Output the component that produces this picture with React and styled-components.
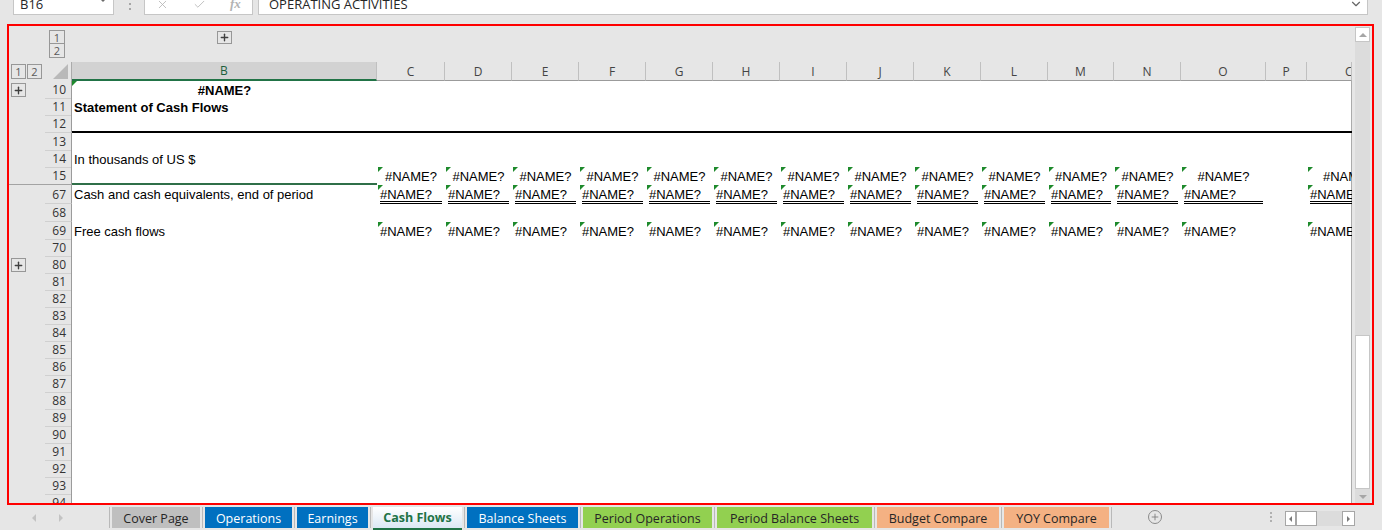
import React from "react"
import styled, { createGlobalStyle } from "styled-components"
import { X, Check, ChevronDown, Plus } from "lucide-react"

// column widths for B..Q (last one is cut by the scrollbar)
const COLS = [305, 68, 67, 67, 67, 67, 67, 67, 67, 67, 67, 66, 67, 85, 41, 45]
const LETTERS = ["B", "C", "D", "E", "F", "G", "H", "I", "J", "K", "L", "M", "N", "O", "P", "C"]
const TEMPLATE = `36px 27px ${COLS.map((w) => w + "px").join(" ")}`

const ROWS = [
    { n: 10, h: 17, plus: true, b: { text: "#NAME?", bold: true, center: true, err: true } },
    { n: 11, h: 17, b: { text: "Statement of Cash Flows", bold: true } },
    { n: 12, h: 18, thick: true },
    { n: 13, h: 17 },
    { n: 14, h: 17, b: { text: "In thousands of US $" } },
    { n: 15, h: 17, sel: true, values: "center" },
    "divider",
    { n: 67, h: 19, b: { text: "Cash and cash equivalents, end of period" }, values: "double" },
    { n: 68, h: 18 },
    { n: 69, h: 17, b: { text: "Free cash flows" }, values: "left" },
    { n: 70, h: 17 },
    { n: 80, h: 17, plus: true },
    ...Array.from({ length: 14 }, (_, i) => ({ n: 81 + i, h: 17 })),
]

const TABS = [
    { label: "Cover Page", w: 88, bg: "#bfbfbf", fg: "#262626" },
    { label: "Operations", w: 87, bg: "#0070c0", fg: "#fff" },
    { label: "Earnings", w: 71, bg: "#0070c0", fg: "#fff" },
    { label: "Cash Flows", w: 89, active: true },
    { label: "Balance Sheets", w: 111, bg: "#0070c0", fg: "#fff" },
    { label: "Period Operations", w: 129, bg: "#92d050", fg: "#262626" },
    { label: "Period Balance Sheets", w: 155, bg: "#92d050", fg: "#262626" },
    { label: "Budget Compare", w: 122, bg: "#f4b183", fg: "#262626" },
    { label: "YOY Compare", w: 105, bg: "#f4b183", fg: "#262626" },
]

const GlobalStyle = createGlobalStyle`
    body {
        margin: 0;
        background: #e6e6e6;
        font-family: "Liberation Sans", Arial, sans-serif;
        overflow: hidden;
    }
`

const Page = styled.div`
    width: 1382px;
    height: 530px;
    display: flex;
    flex-direction: column;
    background: #e6e6e6;
    overflow: hidden;
`

/* ---------- formula bar ---------- */

const TopBar = styled.div`
    height: 24px;
    flex-shrink: 0;
    box-sizing: border-box;
    padding: 0 0 9px 13px;
    display: flex;
    align-items: flex-end;
    overflow: hidden;
    font-family: "Open Sans", sans-serif;
`

const InputBox = styled.div`
    height: 22px;
    box-sizing: border-box;
    background: #fff;
    border: 1px solid #c6c6c6;
    display: flex;
    align-items: center;
    flex-shrink: 0;
    font-size: 13px;
    color: #262626;
`

const NameBox = styled(InputBox)`
    width: 101px;
    padding: 0 6px;
    justify-content: space-between;
`

const Caret = styled.span`
    width: 0;
    height: 0;
    margin-top: -8px;
    border-top: 4px solid #6b6b6b;
    border-left: 4px solid transparent;
    border-right: 4px solid transparent;
`

const VDots = styled.div`
    margin: 0 13px 0 15px;
    align-self: center;
    display: flex;
    flex-direction: column;
    gap: 3px;
    padding-bottom: 2px;

    span {
        width: 2px;
        height: 2px;
        background: #a6a6a6;
    }
`

const FuncBox = styled(InputBox)`
    width: 109px;
    padding-left: 11px;
    gap: 24px;
    color: #b3b3b3;
`

const Fx = styled.span`
    font: italic 13px "Liberation Serif", serif;
    font-weight: 700;
`

const FormulaBox = styled(InputBox)`
    flex: 1;
    margin: 0 14px 0 5px;
    padding: 0 4px 0 10px;
    justify-content: space-between;
`

/* ---------- sheet ---------- */

const Frame = styled.div`
    margin-left: 7px;
    width: 1367px;
    height: 481px;
    flex-shrink: 0;
    box-sizing: border-box;
    border: 2px solid #ff0000;
    display: flex;
    overflow: hidden;
`

const Sheet = styled.div`
    width: 1343px;
    display: flex;
    flex-direction: column;
    overflow: hidden;
`

const GridRow = styled.div`
    display: grid;
    grid-template-columns: ${TEMPLATE};
    height: ${(p) => p.$h}px;
    flex-shrink: 0;
`

const OutlineBtn = styled.div`
    width: ${(p) => p.$w}px;
    height: ${(p) => p.$h}px;
    box-sizing: border-box;
    border: 1px solid #979797;
    display: flex;
    align-items: center;
    justify-content: center;
    font: 11px "Open Sans", sans-serif;
    color: #595959;
    flex-shrink: 0;
`

const LevelStack = styled.div`
    padding: 4px 0 0 4px;
    display: flex;
    flex-direction: column;

    ${OutlineBtn} + ${OutlineBtn} {
        border-top: none;
    }
`

const ColPlus = styled.div`
    justify-self: center;
    padding-top: 5px;
`

const Gutter = styled.div`
    display: flex;
    align-items: center;
    padding-left: 2px;
    gap: 1px;
`

const Corner = styled.div`
    display: flex;
    align-items: flex-end;
    justify-content: flex-end;
    padding: 0 3px 2px 0;
    border-right: 1px solid #ababab;
`

const ColHead = styled.div`
    box-sizing: border-box;
    background: ${(p) => (p.$active ? "#d2d2d2" : "#e6e6e6")};
    border-right: 1px solid #c0c0c0;
    border-bottom: ${(p) => (p.$active ? "2px solid #217346" : "1px solid #9b9b9b")};
    display: flex;
    align-items: center;
    justify-content: ${(p) => (p.$cut ? "flex-start" : "center")};
    padding-left: ${(p) => (p.$cut ? 38 : 0)}px;
    font: 12px "Open Sans", sans-serif;
    color: ${(p) => (p.$active ? "#1e5e3c" : "#444")};
    overflow: hidden;
`

const RowHead = styled.div`
    box-sizing: border-box;
    border-right: 1px solid #9b9b9b;
    border-bottom: 1px solid #d0d0d0;
    display: flex;
    align-items: center;
    justify-content: flex-end;
    padding-right: 5px;
    font: 12px "Open Sans", sans-serif;
    color: #333;
`

const Divider = styled.div`
    height: 1px;
    flex-shrink: 0;
    background: #a3a3a3;
`

const Cell = styled.div`
    position: relative;
    box-sizing: border-box;
    background: #fff;
    display: flex;
    align-items: ${(p) => (p.$mode === "double" ? "flex-start" : "center")};
    justify-content: ${(p) => (p.$mode === "center" ? "center" : "flex-start")};
    padding-left: ${(p) => (p.$mode === "left" ? p.$pad || 3 : 0)}px;
    font-size: 13px;
    font-weight: ${(p) => (p.$bold ? 700 : 400)};
    color: #000;
    white-space: nowrap;
    overflow: hidden;
    border-bottom: ${(p) =>
        p.$thick ? "2px solid #000" : p.$sel ? "2px solid #2f6f48" : "none"};
    box-shadow: ${(p) => (p.$edge ? "inset -1px 0 #ababab" : "none")};
`

const ErrMark = styled.span`
    position: absolute;
    top: 0;
    left: ${(p) => p.$left}px;
    width: 0;
    height: 0;
    border-top: 5px solid #1e8a2c;
    border-right: 5px solid transparent;
`

const DoubleValue = styled.span`
    flex: 1;
    margin: 3px 3px 0 3px;
    line-height: 13px;
    border-bottom: 3px double #000;
`

/* ---------- vertical scrollbar ---------- */

const VScroll = styled.div`
    width: 20px;
    box-sizing: border-box;
    padding: 1px 2px 0 3px;
    display: flex;
    flex-direction: column;
`

const ScrollPart = styled.div`
    height: ${(p) => p.$h}px;
    flex-shrink: 0;
    box-sizing: border-box;
    background: ${(p) => (p.$white ? "#fff" : "#dcdcdc")};
    border: ${(p) => (p.$white ? "1px solid #c6c6c6" : "none")};
    display: flex;
    align-items: center;
    justify-content: center;
`

const Tri = styled.span`
    width: 0;
    height: 0;
    border-left: ${(p) => p.$s}px solid transparent;
    border-right: ${(p) => p.$s}px solid transparent;
    ${(p) => (p.$down ? "border-top" : "border-bottom")}: ${(p) => p.$s}px solid ${(p) => p.$c || "#a6a6a6"};
`

const HTri = styled.span`
    width: 0;
    height: 0;
    border-top: ${(p) => p.$s}px solid transparent;
    border-bottom: ${(p) => p.$s}px solid transparent;
    ${(p) => (p.$right ? "border-left" : "border-right")}: ${(p) => p.$s}px solid ${(p) => p.$c || "#c3c3c3"};
`

/* ---------- sheet tabs ---------- */

const TabBar = styled.div`
    height: 25px;
    flex-shrink: 0;
    box-sizing: border-box;
    padding-top: 2px;
    display: flex;
    align-items: flex-start;
    font-family: "Open Sans", sans-serif;
`

const TabNav = styled.div`
    width: 107px;
    height: 21px;
    padding-left: 32px;
    box-sizing: border-box;
    display: flex;
    align-items: center;
    gap: 23px;
`

const TabSep = styled.div`
    width: 1px;
    height: 21px;
    margin: 0 2px;
    background: #b9b9b9;
    flex-shrink: 0;
`

const Tab = styled.div`
    width: ${(p) => p.$w}px;
    height: ${(p) => (p.$active ? 23 : 21)}px;
    flex-shrink: 0;
    box-sizing: border-box;
    display: flex;
    align-items: center;
    justify-content: center;
    padding-top: ${(p) => (p.$active ? 0 : 1)}px;
    font-size: 12.5px;
    font-weight: ${(p) => (p.$active ? 700 : 400)};
    color: ${(p) => (p.$active ? "#217346" : p.$fg)};
    background: ${(p) => (p.$active ? "linear-gradient(#ffffff, #dce8f4)" : p.$bg)};
    border-bottom: ${(p) => (p.$active ? "2px solid #217346" : "none")};
    white-space: nowrap;
`

const AddSheet = styled.div`
    width: 14px;
    height: 14px;
    margin: 3px 0 0 34px;
    box-sizing: border-box;
    border: 1px solid #8a8a8a;
    border-radius: 50%;
    display: flex;
    align-items: center;
    justify-content: center;
    color: #7a7a7a;
`

const TabDots = styled.div`
    margin: 5px 0 0 108px;
    display: flex;
    flex-direction: column;
    gap: 2px;

    span {
        width: 2px;
        height: 2px;
        background: #b0b0b0;
    }
`

const HScroll = styled.div`
    margin: 4px 0 0 13px;
    height: 15px;
    display: flex;
`

const HPart = styled.div`
    width: ${(p) => p.$w}px;
    height: 15px;
    box-sizing: border-box;
    background: ${(p) => (p.$white ? "#fff" : "#dcdcdc")};
    border: ${(p) => (p.$white ? "1px solid #a6a6a6" : "none")};
    display: flex;
    align-items: center;
    justify-content: center;
`

function DataRow({ row }) {
    const b = row.b || {}
    return (
        <GridRow $h={row.h}>
            <Gutter>
                {row.plus && (
                    <OutlineBtn $w={15} $h={14}>
                        <Plus size={11} strokeWidth={3} color="#404040" />
                    </OutlineBtn>
                )}
            </Gutter>
            <RowHead>{row.n}</RowHead>
            <Cell
                $mode={b.center ? "center" : "left"}
                $pad={2}
                $bold={b.bold}
                $thick={row.thick}
                $sel={row.sel}
            >
                {b.err && <ErrMark $left={0} />}
                {b.text}
            </Cell>
            {COLS.slice(1).map((w, i) => {
                const has = row.values && i !== 13
                const last = i === COLS.length - 2
                // the last column is wider than what shows, so its centred text starts further right
                const centredLast = last && row.values === "center"
                return (
                    <Cell
                        key={i}
                        $mode={centredLast ? "left" : row.values || "left"}
                        $pad={centredLast ? 16 : 3}
                        $thick={row.thick}
                        $edge={last}
                    >
                        {has && <ErrMark $left={1} />}
                        {has &&
                            (row.values === "double" ? (
                                <DoubleValue>#NAME?</DoubleValue>
                            ) : (
                                "#NAME?"
                            ))}
                    </Cell>
                )
            })}
        </GridRow>
    )
}

function App() {
    return (
        <Page>
            <GlobalStyle />
            <TopBar>
                <NameBox>
                    B16
                    <Caret />
                </NameBox>
                <VDots>
                    <span />
                    <span />
                </VDots>
                <FuncBox>
                    <X size={13} strokeWidth={1.5} />
                    <Check size={13} strokeWidth={1.5} />
                    <Fx>fx</Fx>
                </FuncBox>
                <FormulaBox>
                    OPERATING ACTIVITIES
                    <ChevronDown size={14} color="#666" />
                </FormulaBox>
            </TopBar>

            <Frame>
                <Sheet>
                    <GridRow $h={36}>
                        <div />
                        <LevelStack>
                            <OutlineBtn $w={16} $h={14}>1</OutlineBtn>
                            <OutlineBtn $w={16} $h={14}>2</OutlineBtn>
                        </LevelStack>
                        <ColPlus>
                            <OutlineBtn $w={15} $h={13}>
                                <Plus size={11} strokeWidth={3} color="#404040" />
                            </OutlineBtn>
                        </ColPlus>
                    </GridRow>

                    <GridRow $h={19}>
                        <Gutter>
                            <OutlineBtn $w={15} $h={15}>1</OutlineBtn>
                            <OutlineBtn $w={15} $h={15}>2</OutlineBtn>
                        </Gutter>
                        <Corner>
                            <svg width="15" height="15" viewBox="0 0 15 15">
                                <polygon points="15,0 15,15 0,15" fill="#b9b9b9" />
                            </svg>
                        </Corner>
                        {LETTERS.map((l, i) => (
                            <ColHead key={i} $active={i === 0} $cut={i === LETTERS.length - 1}>
                                {l}
                            </ColHead>
                        ))}
                    </GridRow>

                    {ROWS.map((row, i) =>
                        row === "divider" ? <Divider key={i} /> : <DataRow key={i} row={row} />
                    )}
                </Sheet>

                <VScroll>
                    <ScrollPart $h={15} $white>
                        <Tri $s={4} />
                    </ScrollPart>
                    <ScrollPart $h={293} />
                    <ScrollPart $h={154} $white />
                    <ScrollPart $h={15}>
                        <Tri $s={4} $down />
                    </ScrollPart>
                </VScroll>
            </Frame>

            <TabBar>
                <TabNav>
                    <HTri $s={4} />
                    <HTri $s={4} $right />
                </TabNav>
                <TabSep />
                {TABS.map((t) => (
                    <React.Fragment key={t.label}>
                        <Tab $w={t.w} $bg={t.bg} $fg={t.fg} $active={t.active}>
                            {t.label}
                        </Tab>
                        <TabSep />
                    </React.Fragment>
                ))}
                <AddSheet>
                    <Plus size={10} strokeWidth={2} />
                </AddSheet>
                <TabDots>
                    <span />
                    <span />
                    <span />
                </TabDots>
                <HScroll>
                    <HPart $w={11} $white>
                        <HTri $s={3} $c="#7a7a7a" />
                    </HPart>
                    <HPart $w={21} $white />
                    <HPart $w={25} />
                    <HPart $w={13} $white>
                        <HTri $s={3} $right $c="#7a7a7a" />
                    </HPart>
                </HScroll>
            </TabBar>
        </Page>
    )
}

export default App
